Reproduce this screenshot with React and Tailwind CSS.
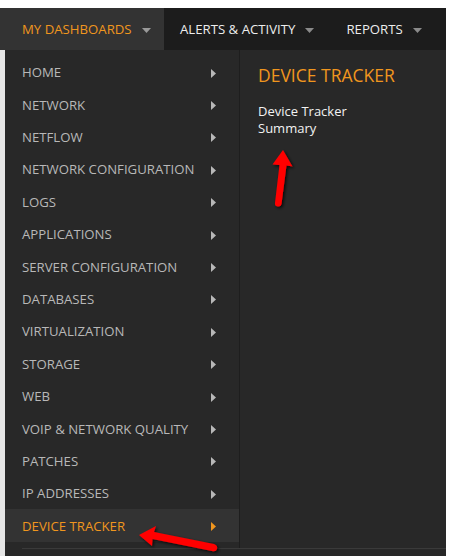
import { Fragment } from 'react';

const items = [
  'HOME',
  'NETWORK',
  'NETFLOW',
  'NETWORK CONFIGURATION',
  'LOGS',
  'APPLICATIONS',
  'SERVER CONFIGURATION',
  'DATABASES',
  'VIRTUALIZATION',
  'STORAGE',
  'WEB',
  'VOIP & NETWORK QUALITY',
  'PATCHES',
  'IP ADDRESSES',
  'DEVICE TRACKER',
];

function Caret({ className }) {
  return (
    <svg width="9" height="5" viewBox="0 0 9 5" className={className}>
      <path d="M0 0h9L4.5 5z" fill="currentColor" />
    </svg>
  );
}

function Chevron({ active }) {
  return (
    <svg width="5" height="9" viewBox="0 0 5 9" className={active ? 'text-[#f0961e]' : 'text-[#b8b8b8]'}>
      <path d="M0 0l5 4.5L0 9z" fill="currentColor" />
    </svg>
  );
}

function RedArrows() {
  return (
    <>
      <svg className="absolute left-[262px] top-[145px]" width="40" height="70" viewBox="0 0 40 70">
        <defs>
          <filter id="sh1" x="-50%" y="-50%" width="200%" height="200%">
            <feDropShadow dx="1.5" dy="1.5" stdDeviation="1.5" floodColor="#000" floodOpacity="0.8" />
          </filter>
        </defs>
        <path
          d="M21 5 L30.5 21.5 L24.5 20.5 L19.5 59 Q19 62 15.5 61.5 Q12.5 61 13 58 L17.5 20 L10.5 19.5 Z"
          fill="#ff0000"
          filter="url(#sh1)"
        />
      </svg>
      <svg className="absolute left-[134px] top-[522px]" width="90" height="34" viewBox="0 0 90 34">
        <defs>
          <filter id="sh2" x="-50%" y="-50%" width="200%" height="200%">
            <feDropShadow dx="1.5" dy="1.5" stdDeviation="1.5" floodColor="#000" floodOpacity="0.8" />
          </filter>
        </defs>
        <path
          d="M5 13 L22 4 L20 10 L80 22 Q84 23.5 83 27 Q82 30 78 29 L18.5 17 L18 24 Z"
          fill="#ff0000"
          filter="url(#sh2)"
        />
      </svg>
    </>
  );
}

export default function App() {
  return (
    <div
      className="relative w-[449px] h-[556px] overflow-hidden bg-white"
      style={{ fontFamily: '"Open Sans", "Noto Sans", sans-serif' }}
    >
      <div className="h-[8px] bg-white" />
      <div className="flex h-[42px] w-[446px] bg-[#1c1c1c] text-[13.2px] pt-[2px]">
        <div className="flex items-center gap-[10px] w-[164px] -mt-[2px] pt-[2px] pl-[22px] bg-[#333333] text-[#f0961e]">
          MY DASHBOARDS <Caret className="text-[#9a9a9a]" />
        </div>
        <div className="flex items-center gap-[10px] pl-[16px] text-[#ededed]">
          ALERTS &amp; ACTIVITY <Caret className="text-[#8a8a8a]" />
        </div>
        <div className="flex items-center gap-[10px] pl-[32px] text-[#ededed]">
          REPORTS <Caret className="text-[#8a8a8a]" />
        </div>
      </div>

      <div className="flex h-[506px]">
        <div className="w-[5px] bg-[#e6e6e6]" />
        <div className="flex flex-col w-[441px] bg-[#282828]">
          <div className="flex flex-1">
            <div className="w-[235px] pt-[6px] border-r border-[#1e1e1e]">
              {items.map((label, i) => {
                const active = i === items.length - 1;
                return (
                  <Fragment key={label}>
                    <div
                      className={`flex items-center justify-between h-[32.4px] pt-[2px] pl-[17px] pr-[23px] text-[13.2px] ${
                        active ? 'bg-[#333333] text-[#f0961e]' : 'text-[#b8b8b8]'
                      }`}
                    >
                      <span>{label}</span>
                      <Chevron active={active} />
                    </div>
                  </Fragment>
                );
              })}
            </div>
            <div className="flex-1 pl-[18px] pt-[13px]">
              <div className="text-[17.5px] text-[#f0961e] leading-[24px]">DEVICE TRACKER</div>
              <div className="mt-[16px] w-[110px] text-[13px] leading-[17px] text-[#f2f2f2]">Device Tracker Summary</div>
            </div>
          </div>
          <div className="h-[8px] ml-[17px] border-t border-[#3a3a3a]" />
        </div>
        <div className="w-[3px] bg-white" />
      </div>

      <RedArrows />
    </div>
  );
}
